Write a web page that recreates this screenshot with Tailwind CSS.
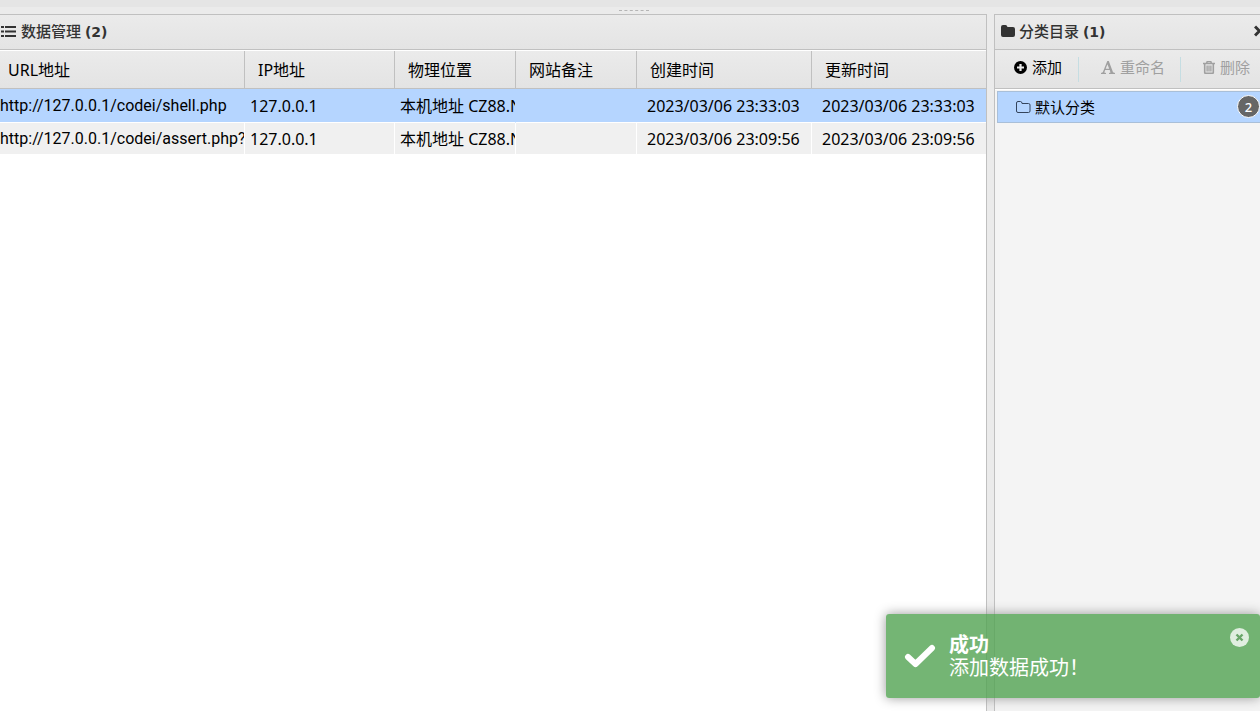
<!DOCTYPE html>
<html lang="zh-CN">
<head>
<meta charset="utf-8">
<meta name="viewport" content="width=device-width, initial-scale=1">
<title>数据管理</title>
<script src="https://cdn.jsdelivr.net/npm/@tailwindcss/browser@4"></script>
</head>
<body class="relative flex h-screen flex-col overflow-hidden bg-[#ebebeb] font-['Noto_Sans','Noto_Sans_CJK_SC',sans-serif] text-base text-black">
  <div class="h-[7px] shrink-0 bg-[#e5e5e5]"></div>
  <div class="flex h-[7px] shrink-0 items-center justify-center">
    <div class="ml-2 w-[30px] border-t border-dashed border-[#b5b5b5]"></div>
  </div>

  <div class="flex min-h-0 flex-1 gap-[7px]">
    <main class="flex min-w-0 flex-1 flex-col border-t border-r border-[#c0c0c0] bg-white">
      <header class="flex h-[35px] shrink-0 items-center gap-[5px] border-b border-[#c0c0c0] bg-linear-to-b from-[#ebebeb] to-[#e4e4e4] pb-0.5 pl-px text-[#333]">
        <svg class="h-[13px] w-[15px] shrink-0" viewBox="0 0 15 13" fill="currentColor" aria-hidden="true">
          <path d="M0 1h3v2H0zM4 1h11v2H4zM0 5.500h3v2H0zM4 5.500h11v2H4zM0 10h3v2H0zM4 10h11v2H4z"/>
        </svg>
        <h1 class="text-[15px] leading-5 font-medium">数据管理 <span class="font-['DejaVu_Sans'] text-sm font-bold">(2)</span></h1>
      </header>
      <table class="mt-px w-full table-fixed border-separate border-spacing-0 text-left leading-5 whitespace-nowrap">
        <colgroup>
          <col class="w-[245px]"><col class="w-[150px]"><col class="w-[121px]"><col class="w-[121px]"><col class="w-[175px]"><col>
        </colgroup>
        <thead>
          <tr class="h-[38px] bg-linear-to-b from-[#ebebeb] to-[#e3e3e3]">
            <th scope="col" class="border-r border-b border-[#c0c0c0] pl-2 font-normal">URL地址</th>
            <th scope="col" class="border-r border-b border-[#c0c0c0] pl-[13px] font-normal">IP地址</th>
            <th scope="col" class="border-r border-b border-[#c0c0c0] pl-[13px] font-normal">物理位置</th>
            <th scope="col" class="border-r border-b border-[#c0c0c0] pl-[13px] font-normal">网站备注</th>
            <th scope="col" class="border-r border-b border-[#c0c0c0] pl-[13px] font-normal">创建时间</th>
            <th scope="col" class="border-b border-[#c0c0c0] pl-[13px] font-normal">更新时间</th>
          </tr>
        </thead>
        <tbody>
          <tr class="h-[34px] bg-[#b5d5ff]">
            <td class="overflow-hidden border-b border-white font-[Roboto]">http://127.0.0.1/codei/shell.php</td>
            <td class="overflow-hidden border-b border-white pl-[5px]">127.0.0.1</td>
            <td class="overflow-hidden border-r border-b border-r-[#b5d5ff] border-b-white pl-[5px]">本机地址 CZ88.NET</td>
            <td class="border-b border-white"></td>
            <td class="overflow-hidden border-b border-white pl-2.5">2023/03/06 23:33:03</td>
            <td class="overflow-hidden border-b border-white pl-2.5">2023/03/06 23:33:03</td>
          </tr>
          <tr class="h-[31px] bg-[#f0f0f0]">
            <td class="overflow-hidden border-r border-white font-[Roboto]">http://127.0.0.1/codei/assert.php?</td>
            <td class="overflow-hidden border-r border-white pl-[5px]">127.0.0.1</td>
            <td class="overflow-hidden border-r border-white pl-[5px]">本机地址 CZ88.NET</td>
            <td class="border-r border-white"></td>
            <td class="overflow-hidden border-r border-white pl-2.5">2023/03/06 23:09:56</td>
            <td class="overflow-hidden pl-2.5">2023/03/06 23:09:56</td>
          </tr>
        </tbody>
      </table>
    </main>

    <aside class="flex w-[266px] shrink-0 flex-col overflow-hidden border-t border-l border-[#c0c0c0] bg-[#f4f4f4]">
      <header class="flex h-[35px] shrink-0 items-center gap-1 border-b border-[#c0c0c0] bg-linear-to-b from-[#ebebeb] to-[#e4e4e4] pb-0.5 pl-1.5 text-[#333]">
        <svg class="h-3 w-[14px] shrink-0" viewBox="0 0 14 12" fill="currentColor" aria-hidden="true">
          <path d="M0 2Q0 0 2 0H4.500Q6 0 6.500 2H12Q14 2 14 4V10Q14 12 12 12H2Q0 12 0 10Z"/>
        </svg>
        <h2 class="text-[15px] leading-5 font-medium">分类目录 <span class="font-['DejaVu_Sans'] text-sm font-bold">(1)</span></h2>
        <button type="button" aria-label="折叠" class="-mr-1 ml-auto">
          <svg class="h-3 w-[10px]" viewBox="0 0 10 12" fill="none" stroke="currentColor" stroke-width="3" aria-hidden="true"><path d="M1 1.500 5.500 6 1 10.500"/></svg>
        </button>
      </header>
      <div class="flex h-[39px] shrink-0 items-center border-b border-[#c0c0c0] bg-linear-to-b from-[#ebebeb] to-[#e3e3e3] text-[15px] leading-5 whitespace-nowrap">
        <button type="button" class="flex h-[25px] w-[84px] shrink-0 items-center gap-[5px] border-r border-[#c5dde2] pb-1 pl-[19px]">
          <svg class="size-[13px] shrink-0" viewBox="0 0 13 13" aria-hidden="true"><circle cx="6.500" cy="6.500" r="6.500"/><path d="M6.500 3v7M3 6.500h7" stroke="#ebebeb" stroke-width="2.200"/></svg>
          添加
        </button>
        <button type="button" disabled class="flex h-[25px] w-[102px] shrink-0 items-center gap-[5px] border-r border-[#c5dde2] pb-1 pl-[22px] text-[#a0a0a0]">
          <svg class="h-[13px] w-[14px] shrink-0" viewBox="0 0 14 13" fill="currentColor" fill-rule="evenodd" aria-hidden="true"><path d="M6.300 0H7.800L12 11.200 14 12V13H8V12L9.500 11.500 8.700 9H4.200L3.300 11.500 5 12V13H0V12L1.800 11.200ZM6.400 3.200 4.700 7.800H8.200Z"/></svg>
          重命名
        </button>
        <button type="button" disabled class="flex h-[25px] shrink-0 items-center gap-[5px] pb-1 pl-[22px] text-[#a0a0a0]">
          <svg class="h-[13px] w-3 shrink-0" viewBox="0 0 12 13" fill="none" stroke="currentColor" aria-hidden="true"><path d="M0 2.500h12M3.500 2.500 4.200.6h3.600l.7 1.900" stroke-width="1.500"/><path d="M1.700 3v8.500q0 .8.800.8h7q.8 0 .8-.8V3" stroke-width="1.600"/><path d="M4.100 4.500v6M6 4.500v6M7.900 4.500v6" stroke-width="1.300"/></svg>
          删除
        </button>
      </div>
      <div class="border-t border-white pt-px pl-0.5">
        <button type="button" class="flex h-8 w-full items-center gap-1 border border-r-0 border-[#a9bfd8] bg-[#b5d5ff] pb-px pl-[18px] text-[15px] leading-5">
          <svg class="h-3 w-[15px] shrink-0" viewBox="0 0 15 12" fill="none" stroke="#34445c" aria-hidden="true"><path d="M.5 2Q.5.500 2 .5H4.500Q6 .5 6 2.500H12.500Q14 2.500 14 4V10Q14 11.500 12.500 11.500H2Q.5 11.500.5 10Z"/></svg>
          默认分类
          <span class="ml-auto flex size-[23px] items-center justify-center rounded-full border border-white bg-[#666] font-['Noto_Sans'] text-[13px] font-medium text-white">2</span>
        </button>
      </div>
    </aside>
  </div>

  <div role="status" class="absolute right-0 bottom-[13px] flex h-[84px] w-[374px] items-center rounded-[3px] bg-[#51a351]/80 pl-[18px] text-white shadow-[0_0_12px_#999]">
    <svg class="h-6 w-8 shrink-0" viewBox="0 0 32 24" fill="none" stroke="currentColor" stroke-width="6" stroke-linecap="round" stroke-linejoin="round" aria-hidden="true"><path d="M4 13l7.500 7L28 4"/></svg>
    <div class="ml-[13px] pt-0.5 font-['Liberation_Serif','Noto_Sans_CJK_SC',serif] text-xl leading-[23px]">
      <div class="font-bold">成功</div>
      <div>添加数据成功！</div>
    </div>
    <button type="button" aria-label="关闭" class="mt-3.5 mr-[11px] ml-auto self-start">
      <svg class="size-[19px]" viewBox="0 0 19 19" aria-hidden="true"><circle cx="9.500" cy="9.500" r="9.500" fill="#e0eee0"/><path d="M6.500 6.500l6 6M12.500 6.500l-6 6" stroke="#6aa66a" stroke-width="2.400"/></svg>
    </button>
  </div>
</body>
</html>
